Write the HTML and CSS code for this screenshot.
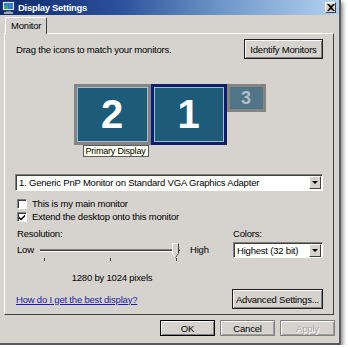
FILE: index.html
```html
<!DOCTYPE html>
<html>
<head>
<meta charset="utf-8">
<title>Display Settings</title>
<link rel="stylesheet" href="styles.css">
</head>
<body>
<div class="window">
	<div class="titlebar">
		<svg class="app-icon" width="13" height="13" viewBox="0 0 13 13">
			<rect x="0.5" y="0.5" width="12" height="9" fill="#d8e4f0" stroke="#2a3a6a"/>
			<rect x="2" y="2" width="9" height="6" fill="#2f7fd0"/>
			<rect x="2" y="5" width="4" height="3" fill="#3cb04a"/>
			<rect x="4" y="10" width="5" height="1" fill="#6a7a90"/>
			<rect x="2" y="11" width="9" height="2" fill="#9aa8b8"/>
		</svg>
		<span class="title">Display Settings</span>
		<span class="close">
			<svg width="8" height="7" viewBox="0 0 8 7">
				<path d="M0 0h2l2 2 2-2h2L5 3.5 8 7H6L4 5 2 7H0l3-3.5z" fill="#000"/>
			</svg>
		</span>
	</div>
	<div class="body">
		<div class="tabs"><div class="tab">Monitor</div></div>
		<div class="panel">
			<div class="row top-row">
				<span>Drag the icons to match your monitors.</span>
				<button class="btn">Identify Monitors</button>
			</div>

			<div class="layout">
				<div class="mon-col">
					<div class="monitor">2</div>
					<div class="tip">Primary Display</div>
				</div>
				<div class="monitor active">1</div>
				<div class="monitor small">3</div>
			</div>

			<div class="select wide">
				<span class="select-text">1. Generic PnP Monitor on Standard VGA Graphics Adapter</span>
				<span class="drop"><span class="arrow"></span></span>
			</div>

			<label class="check"><span class="box"></span>This is my main monitor</label>
			<label class="check">
				<span class="box">
					<svg width="8" height="8" viewBox="0 0 8 8"><path d="M1 3.5l2 2 4-4v2l-4 4-2-2z" fill="#000"/></svg>
				</span>Extend the desktop onto this monitor
			</label>

			<div class="settings">
				<div class="res">
					<div class="label">Resolution:</div>
					<div class="slider-row">
						<span class="end">Low</span>
						<div class="slider">
							<div class="track"></div>
							<svg class="thumb" width="7" height="15" viewBox="0 0 7 15">
								<path d="M0.5 0.5h6v10l-3 4-3-4z" fill="#d6d3ce" stroke="#fff"/>
								<path d="M6.5 0.5v10l-3 4" fill="none" stroke="#404040"/>
							</svg>
							<div class="ticks"><i></i><i></i><i></i></div>
						</div>
						<span class="end high">High</span>
					</div>
					<div class="pixels">1280 by 1024 pixels</div>
				</div>
				<div class="colors">
					<div class="label">Colors:</div>
					<div class="select">
						<span class="select-text">Highest (32 bit)</span>
						<span class="drop"><span class="arrow"></span></span>
					</div>
				</div>
			</div>

			<div class="row bottom-row">
				<a href="#" class="help">How do I get the best display?</a>
				<button class="btn adv">Advanced Settings...</button>
			</div>
		</div>

		<div class="actions">
			<button class="btn small-btn default">OK</button>
			<button class="btn small-btn">Cancel</button>
			<button class="btn small-btn" disabled>Apply</button>
		</div>
	</div>
</div>
</body>
</html>
```

FILE: styles.css
```css
html, body {margin:0;
	padding:0;
	background:#ffffff;}
body {font-family:"Liberation Sans", Arial, sans-serif;
	font-size:9.5px;
	letter-spacing:-0.2px;
	color:#000;}

.window {width:341px;
	height:345px;
	box-sizing:border-box;
	background:#d6d3ce;
	border-right:2px solid #5a5a5a;
	border-bottom:2px solid #5a5a5a;
	box-shadow:2px 2px 4px rgba(0,0,0,0.45);
	display:flex;
	flex-direction:column;}

/* title bar */
.titlebar {height:15px;
	display:flex;
	align-items:center;
	padding:0 3px 0 2px;
	background:linear-gradient(to right, #0c2a6e 0%, #2c509a 35%, #6e96c8 65%, #b4d2f0 100%);}
.app-icon {flex:none;}
.title {color:#fff;
	font-weight:bold;
	font-size:9.5px;
	letter-spacing:-0.3px;
	margin-left:3px;
	flex:1;}
.close {width:9px;
	height:9px;
	display:flex;
	align-items:center;
	justify-content:center;
	background:#d6d3ce;
	border:1px solid;
	border-color:#fff #404040 #404040 #fff;}

.body {flex:1;
	padding:2px 5px 0 4px;
	display:flex;
	flex-direction:column;}

/* tab */
.tabs {display:flex;
	padding-left:1px;}
.tab {height:16px;
	line-height:16px;
	padding:0 5px;
	border:1px solid #fff;
	border-right-color:#404040;
	border-bottom:none;
	border-radius:2px 2px 0 0;
	background:#d6d3ce;
	position:relative;
	z-index:1;
	margin-bottom:-1px;}

.panel {height:282px;
	box-sizing:border-box;
	border:1px solid;
	border-color:#fff #404040 #404040 #fff;
	padding:5px 10px 0 11px;
	display:flex;
	flex-direction:column;}

.row {display:flex;
	align-items:center;
	justify-content:space-between;}
.top-row {height:20px;}

/* buttons */
.btn {font-family:inherit;
	font-size:9.5px;
	letter-spacing:-0.2px;
	white-space:nowrap;
	color:#000;
	background:#d6d3ce;
	border:1px solid #1e1e1e;
	box-shadow:inset 1px 1px 0 #fff, inset -1px -1px 0 #808080;
	padding:0;
	height:20px;}
.top-row .btn {width:79px;}
.adv {width:91px;}
.small-btn {width:55px;
	height:16px;
	border-color:#808080;
	box-shadow:inset 1px 1px 0 #fff, inset -1px -1px 0 #a0a0a0;}
.small-btn.default {border:1px solid #000;
	box-shadow:inset 1px 1px 0 #fff, inset -1px -1px 0 #808080;}
.btn:disabled {color:#a8a8a8;
	text-shadow:1px 1px 0 #fff;}

/* monitor arrangement */
.layout {margin-top:25px;
	display:flex;
	justify-content:center;
	align-items:flex-start;
	height:73px;}
.mon-col {display:flex;
	flex-direction:column;}
.monitor {width:77px;
	height:61px;
	box-sizing:border-box;
	border:3px solid #848484;
	background:#1d5b79;
	box-shadow:inset 0 0 0 1px #a4bccb;
	color:#fff;
	font-weight:bold;
	font-size:40px;
	letter-spacing:0;
	display:flex;
	align-items:center;
	justify-content:center;}
.monitor.active {width:76px;
	border-color:#0c1f6c;}
.monitor.small {width:39px;
	height:28px;
	font-size:18px;
	color:#b4bec6;
	background:#4f7587;
	box-shadow:none;}
.tip {align-self:flex-start;
	margin-left:9px;
	height:12px;
	line-height:11px;
	box-sizing:border-box;
	padding:0 2px;
	border:1px solid #5a5a5a;
	background:#fffff0;
	font-size:9px;}

/* selects */
.select {height:17px;
	box-sizing:border-box;
	background:#fff;
	border:1px solid;
	border-color:#808080 #fff #fff #808080;
	box-shadow:inset 1px 1px 0 #404040;
	display:flex;
	align-items:center;
	padding-left:3px;}
.select.wide {margin-top:17px;
	margin-left:-1px;}
.select-text {flex:1;
	white-space:nowrap;
	overflow:hidden;}
.drop {width:12px;
	height:13px;
	margin-right:1px;
	box-sizing:border-box;
	background:#d6d3ce;
	border:1px solid;
	border-color:#fff #404040 #404040 #fff;
	display:flex;
	align-items:center;
	justify-content:center;}
.arrow {width:0;
	height:0;
	border-left:3px solid transparent;
	border-right:3px solid transparent;
	border-top:3px solid #000;}

/* checkboxes */
.check {height:13px;
	display:flex;
	align-items:center;
	padding-left:1px;}
.check:first-of-type {margin-top:6px;}
.box {width:10px;
	height:10px;
	box-sizing:border-box;
	margin-right:5px;
	background:#fff;
	border:1px solid;
	border-color:#808080 #fff #fff #808080;
	box-shadow:inset 1px 1px 0 #404040;
	display:flex;
	align-items:center;
	justify-content:center;}

/* resolution + colors */
.settings {display:flex;
	justify-content:space-between;
	margin-top:5px;}
.label {height:12px;
	line-height:12px;
	margin-bottom:2px;}
.res {width:210px;
	padding-left:1px;}
.slider-row {display:flex;
	align-items:flex-start;}
.end {line-height:16px;
	width:23px;}
.end.high {margin-left:10px;}
.slider {width:140px;
	height:20px;
	position:relative;}
.track {position:absolute;
	left:0;
	right:0;
	top:7px;
	height:1px;
	border-top:1px solid #808080;
	border-bottom:1px solid #fff;
	background:#404040;}
.thumb {position:absolute;
	right:1px;
	top:1px;}
.ticks {position:absolute;
	left:4px;
	right:3px;
	top:16px;
	display:flex;
	justify-content:space-between;}
.ticks i {display:block;
	width:1px;
	height:3px;
	background:#404040;}
.pixels {width:190px;
	text-align:center;
	margin-top:10px;
	line-height:12px;}
.colors {width:90px;}
.colors .select {height:16px;}

.bottom-row {margin-top:5px;}
.help {color:#1c1ca8;
	text-decoration:underline;}

.actions {display:flex;
	justify-content:flex-end;
	gap:5px;
	margin-top:5px;
	margin-right:-1px;}
```
